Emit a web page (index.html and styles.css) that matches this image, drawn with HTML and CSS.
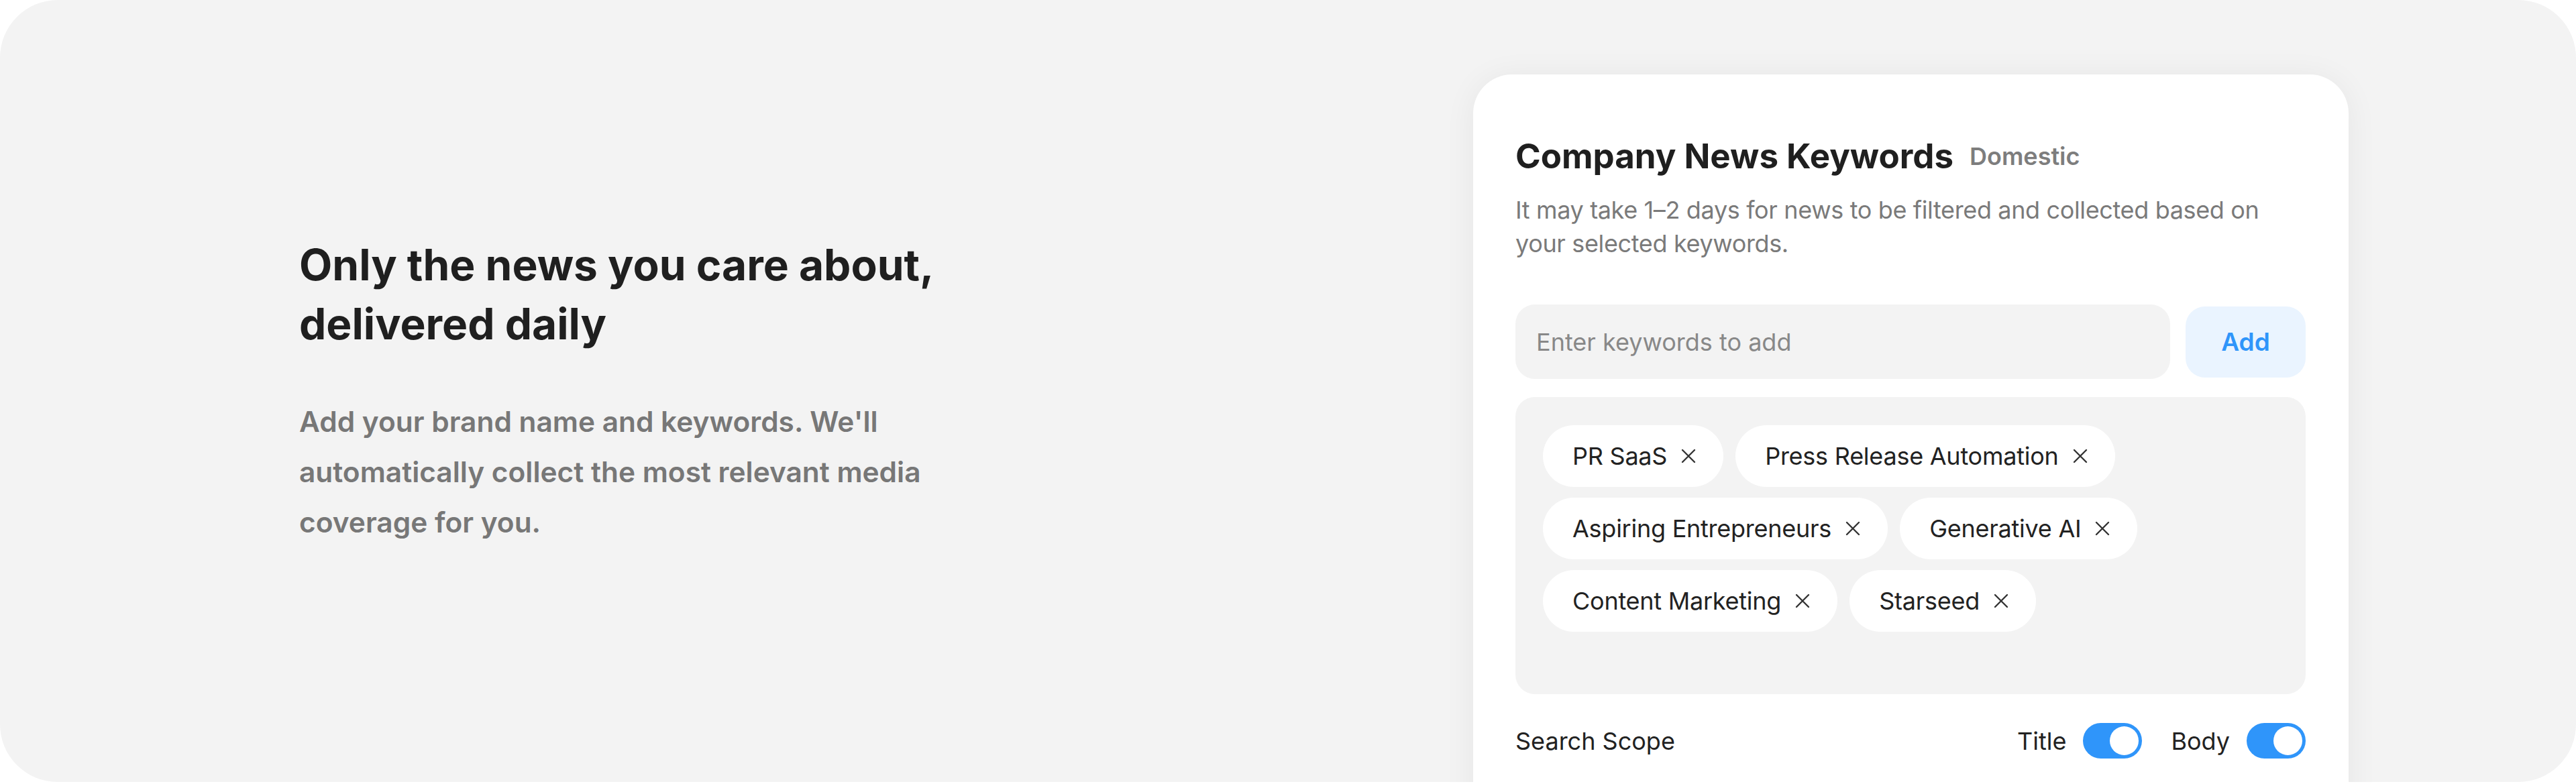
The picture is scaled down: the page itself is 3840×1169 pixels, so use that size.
FILE: index.html
```html
<!DOCTYPE html>
<html lang="en">
<head>
    <meta charset="UTF-8">
    <meta name="viewport" content="width=device-width, initial-scale=1.0">
    <title>Company News Keywords</title>
    <link rel="stylesheet" href="styles.css">
</head>
<body>
    <section class="panel">
        <div class="intro">
            <h2 class="intro-title">Only the news you care about, delivered daily</h2>
            <p class="intro-text">Add your brand name and keywords. We'll automatically collect the most relevant media coverage for you.</p>
        </div>

        <div class="card">
            <div class="card-header">
                <h3 class="card-title">Company News Keywords</h3>
                <span class="card-region">Domestic</span>
            </div>
            <p class="card-note">It may take 1–2 days for news to be filtered and collected based on your selected keywords.</p>

            <div class="keyword-form">
                <input class="keyword-input" type="text" placeholder="Enter keywords to add">
                <button class="keyword-add">Add</button>
            </div>

            <div class="tag-box">
                <span class="tag">PR SaaS
                    <svg class="tag-close" viewBox="0 0 24 24"><path d="M3 3L21 21M21 3L3 21"/></svg>
                </span>
                <span class="tag">Press Release Automation
                    <svg class="tag-close" viewBox="0 0 24 24"><path d="M3 3L21 21M21 3L3 21"/></svg>
                </span>
                <span class="tag">Aspiring Entrepreneurs
                    <svg class="tag-close" viewBox="0 0 24 24"><path d="M3 3L21 21M21 3L3 21"/></svg>
                </span>
                <span class="tag">Generative AI
                    <svg class="tag-close" viewBox="0 0 24 24"><path d="M3 3L21 21M21 3L3 21"/></svg>
                </span>
                <span class="tag">Content Marketing
                    <svg class="tag-close" viewBox="0 0 24 24"><path d="M3 3L21 21M21 3L3 21"/></svg>
                </span>
                <span class="tag">Starseed
                    <svg class="tag-close" viewBox="0 0 24 24"><path d="M3 3L21 21M21 3L3 21"/></svg>
                </span>
            </div>

            <div class="scope">
                <span class="scope-label">Search Scope</span>
                <div class="scope-options">
                    <label class="scope-option">Title <span class="switch on"></span></label>
                    <label class="scope-option">Body <span class="switch on"></span></label>
                </div>
            </div>
        </div>
    </section>
</body>
</html>
```

FILE: styles.css
```css
body {
    margin: 0;
    background-color: #fff;
    font-family: Inter, "Noto Sans", Arial, sans-serif;
    color: #1f1f1f;
}
.panel {
    display: flex;
    justify-content: space-between;
    height: 1166px;
    padding: 0 339px 0 446px;
    background-color: #f3f3f3;
    border-radius: 86px;
    overflow: hidden;
    box-sizing: border-box;
}

/* left copy */
.intro {
    align-self: center;
    max-width: 1000px;
}
.intro-title {
    margin: 0 0 64px;
    font-size: 64px;
    line-height: 88px;
    font-weight: 700;
    color: #1f1f1f;
}
.intro-text {
    margin: 0;
    font-size: 42.4px;
    line-height: 75px;
    font-weight: 600;
    color: #777;
}

/* keyword card, runs past the bottom of the panel */
.card {
    align-self: flex-start;
    flex-shrink: 0;
    width: 1305px;
    margin-top: 111px;
    padding: 91px 64px 120px 63px;
    background-color: #fff;
    border-radius: 58px;
    box-shadow: 0 4px 48px rgba(0, 0, 0, 0.06);
    box-sizing: border-box;
}
.card-header {
    display: flex;
    align-items: center;
    gap: 24px;
}
.card-title {
    margin: 0;
    font-size: 51px;
    line-height: 62px;
    font-weight: 700;
}
.card-region {
    font-size: 36px;
    font-weight: 600;
    color: #7d7d7d;
}
.card-note {
    margin: 24px 0 0;
    font-size: 36px;
    line-height: 50px;
    letter-spacing: -0.36px;
    color: #7a7a7a;
}
.keyword-form {
    display: flex;
    align-items: center;
    gap: 23px;
    margin-top: 66px;
}
.keyword-input {
    flex: 1;
    height: 111px;
    padding: 0 31px;
    border: none;
    border-radius: 29px;
    background-color: #f3f3f3;
    font-family: inherit;
    font-size: 36px;
    color: #222;
    outline: none;
}
.keyword-input::placeholder {
    color: #888;
}
.keyword-add {
    width: 179px;
    height: 106px;
    border: none;
    border-radius: 29px;
    background-color: #eaf4ff;
    color: #2f95fa;
    font-family: inherit;
    font-size: 37px;
    font-weight: 600;
    cursor: pointer;
}
.tag-box {
    display: flex;
    flex-wrap: wrap;
    align-content: flex-start;
    gap: 16px 18px;
    height: 443px;
    margin-top: 27px;
    padding: 42px 41px;
    background-color: #f3f3f3;
    border-radius: 29px;
    box-sizing: border-box;
}
.tag {
    display: inline-flex;
    align-items: center;
    gap: 20px;
    height: 92px;
    padding: 0 40px 0 44px;
    background-color: #fff;
    border-radius: 46px;
    font-size: 36px;
    letter-spacing: -0.25px;
    color: #222;
    box-sizing: border-box;
}
.tag-close {
    width: 24px;
    height: 24px;
    fill: none;
    stroke: #333;
    stroke-width: 2.4;
    stroke-linecap: round;
}
.scope {
    display: flex;
    justify-content: space-between;
    align-items: center;
    margin-top: 43px;
    font-size: 36px;
    color: #222;
}
.scope-options {
    display: flex;
    gap: 43px;
}
.scope-option {
    display: flex;
    align-items: center;
    gap: 25px;
}
.switch {
    position: relative;
    width: 88px;
    height: 53px;
    border-radius: 27px;
    background-color: #d5d5d5;
}
.switch::after {
    content: "";
    position: absolute;
    top: 5px;
    left: 5px;
    width: 43px;
    height: 43px;
    border-radius: 50%;
    background-color: #fff;
}
.switch.on {
    background-color: #2f95fa;
}
.switch.on::after {
    left: 40px;
}
```
